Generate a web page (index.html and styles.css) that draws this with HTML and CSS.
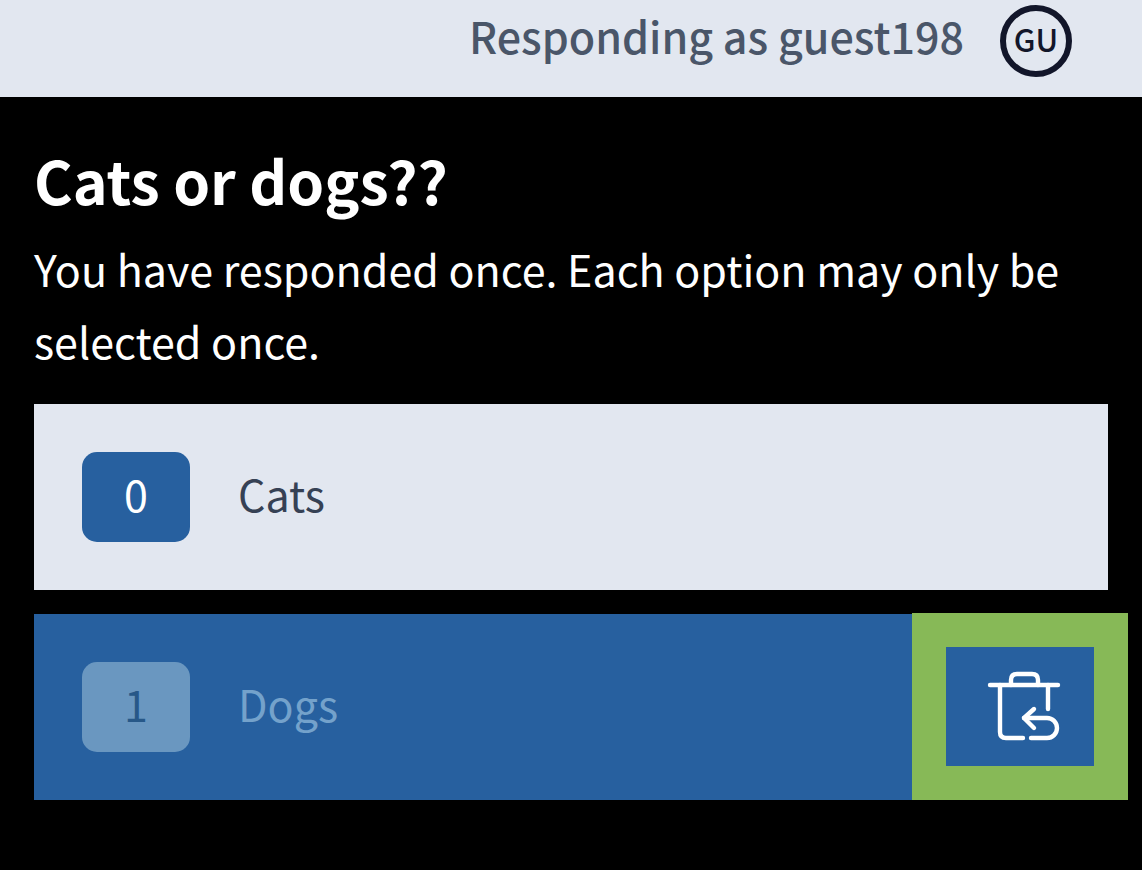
FILE: index.html
```
<!DOCTYPE html>
<html lang="en">
<head>
  <meta charset="UTF-8">
  <meta name="viewport" content="width=device-width, initial-scale=1">
  <title>Cats or dogs??</title>
  <link rel="stylesheet" href="styles.css">
</head>
<body>
  <header class="topbar">
    <span class="user">Responding as guest198</span>
    <button type="button" class="avatar">GU</button>
  </header>

  <main class="poll">
    <h1>Cats or dogs??</h1>
    <p class="status">You have responded once. Each option may only be selected once.</p>

    <ul class="options">
      <li class="option">
        <button type="button" class="choice">
          <span class="count">0</span>
          <span class="label">Cats</span>
        </button>
      </li>
      <li class="option selected">
        <button type="button" class="choice" disabled>
          <span class="count">1</span>
          <span class="label">Dogs</span>
        </button>
        <button type="button" class="undo" aria-label="Clear response">
          <svg width="80" height="76" viewBox="0 0 80 76" aria-hidden="true">
            <path d="M6 17H74"/>
            <path d="M27 17V12Q27 6 33 6H48Q54 6 54 12V17"/>
            <path d="M16 17V64Q16 70 22 70H39"/>
            <path d="M64 17V41"/>
            <path d="M50 41L40 50L50 60"/>
            <path d="M40 50H63A10 10 0 0 1 63 70H47"/>
          </svg>
        </button>
      </li>
    </ul>
  </main>
</body>
</html>
```
FILE: styles.css
```
* {
  box-sizing: border-box;
}
body {
  margin: 0;
  background-color: #000000;
  color: #ffffff;
  font-family: "Noto Sans CJK SC", "Open Sans", sans-serif;
  font-size: 43px;
  line-height: 72px;
}
button {
  font: inherit;
  border: 0;
  padding: 0;
}
.topbar {
  display: flex;
  justify-content: flex-end;
  align-items: flex-start;
  gap: 36px;
  padding: 5px 70px 20px;
  background-color: #e2e7f0;
}
.user {
  color: #4a5669;
  font-weight: 500;
  line-height: 60px;
}
.avatar {
  width: 72px;
  height: 72px;
  padding-bottom: 4px;
  border: 6px solid #12162a;
  border-radius: 50%;
  background: none;
  color: #12162a;
  font-size: 31px;
  font-weight: 500;
  line-height: 56px;
}
.poll {
  padding: 43px 34px;
}
.poll h1 {
  margin: 0 0 12px;
  font-size: 59px;
  font-weight: 700;
  line-height: 80px;
}
.status {
  margin: 0 0 28px;
}
.options {
  display: flex;
  flex-direction: column;
  gap: 24px;
  margin: 0;
  padding: 0;
  list-style: none;
}
.option {
  position: relative;
}
.choice {
  display: flex;
  align-items: center;
  gap: 48px;
  width: 100%;
  padding: 48px;
  background-color: #e2e7f0;
  color: #364154;
  text-align: left;
}
.count, .label {
  padding-bottom: 8px;
  line-height: 82px;
}
.count {
  width: 108px;
  border-radius: 15px;
  background-color: #27609f;
  color: #ffffff;
  text-align: center;
}
.selected .choice {
  background-color: #27609f;
  color: #74a2cb;
}
.selected .count {
  background-color: #6a97c0;
  color: #275888;
}
.undo {
  position: absolute;
  top: -1px;
  right: -20px;
  bottom: 0;
  display: flex;
  align-items: center;
  justify-content: center;
  width: 216px;
  padding: 0 0 2px 8px;
  border: 34px solid #87b957;
  background-color: #27609f;
}
.undo svg {
  fill: none;
  stroke: #ffffff;
  stroke-width: 4.4;
  stroke-linecap: round;
  stroke-linejoin: round;
}
```
